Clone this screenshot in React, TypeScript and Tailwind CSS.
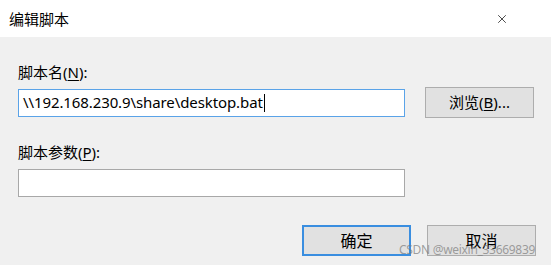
import { X } from "lucide-react";

const font = { fontFamily: '"Noto Sans", "Noto Sans CJK SC", sans-serif' };

const Mn = ({ c }: { c: string }) => <span className="underline underline-offset-2">{c}</span>;

const App = () => {
  return (
    <div className="relative w-[551px] h-[265px] bg-[#f0f0f0] text-black overflow-hidden" style={font}>
      <div className="h-[37px] bg-white flex items-center justify-between pl-[9px] pr-[42px]">
        <span className="text-[15px] leading-[20px]">编辑脚本</span>
        <X className="w-[14px] h-[14px]" strokeWidth={1.2} />
      </div>

      <div className="pl-[18px] pr-[15px] pt-[25px]">
        <div className="text-[15px] leading-[20px]">
          脚本名(<Mn c="N" />):
        </div>
        <div className="flex items-center mt-[5px]">
          <div className="w-[387px] h-[28px] bg-white border border-[#5aa3e8] flex items-center px-[4px] text-[15px] tracking-[-0.1px]">
            <span>\\192.168.230.9\share\desktop.bat</span>
            <span className="w-px h-[18px] bg-black ml-px" />
          </div>
          <button className="ml-[20px] w-[109px] h-[31px] bg-[#e1e1e1] border border-[#adadad] text-[15px]">
            浏览(<Mn c="B" />)...
          </button>
        </div>

        <div className="text-[15px] leading-[20px] mt-[24px]">
          脚本参数(<Mn c="P" />):
        </div>
        <div className="w-[387px] h-[28px] bg-white border border-[#a8a8a8] mt-[7px]" />

        <div className="flex justify-end gap-[16px] mt-[28px]">
          <button className="w-[109px] h-[31px] bg-[#e1e1e1] border-2 border-[#3a8ee0] text-[16px]">确定</button>
          <button className="w-[109px] h-[31px] bg-[#e1e1e1] border border-[#adadad] text-[16px]">取消</button>
        </div>
      </div>

      <span className="absolute left-[399px] top-[242px] whitespace-nowrap text-[12px] leading-[16px] tracking-[-0.3px] text-[#7a7a7a]/70">
        CSDN @weixin_33669839
      </span>
    </div>
  );
};

export default App;
